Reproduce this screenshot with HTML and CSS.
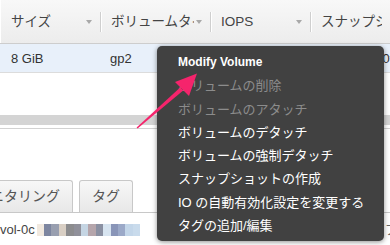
FILE: index.html
```html
<!DOCTYPE html>
<html lang="ja">

<head>
    <meta charset="UTF-8">
    <meta name="viewport" content="width=device-width, initial-scale=1.0">
    <title>EC2 Volumes</title>
    <link rel="stylesheet" href="styles.css">
</head>

<body>
    <div class="page">
        <div class="grid">
            <div class="grid-head">
                <div class="hcell col-size"><span class="htext">サイズ</span><i class="sort"></i></div>
                <div class="hcell col-type"><span class="htext">ボリュームタイプ</span><i class="sort"></i></div>
                <div class="hcell col-iops"><span class="htext">IOPS</span><i class="sort"></i></div>
                <div class="hcell col-snap"><span class="htext">スナップショット</span></div>
            </div>
            <div class="grid-row selected">
                <div class="cell col-size">8 GiB</div>
                <div class="cell col-type">gp2</div>
                <div class="cell col-iops">100 / 3000</div>
                <div class="cell col-snap">snap-0e4a0f8</div>
            </div>
        </div>

        <div class="hscroll">
            <div class="hscroll-bar"></div>
        </div>

        <div class="tabs">
            <div class="tab">モニタリング</div>
            <div class="tab">タグ</div>
        </div>

        <div class="detail">
            <span class="vol-id">vol-0c</span>
            <span class="mosaic">
                <i style="background:#f1e9df"></i><i style="background:#7d86a0"></i><i style="background:#999fb0"></i><i style="background:#d9cfc4"></i><i style="background:#8c8c8e"></i><i style="background:#90909a"></i><i style="background:#c5d5e3"></i><i style="background:#b5a5ab"></i><i style="background:#8a90a2"></i><i style="background:#d7e4f0"></i><i style="background:#8995b8"></i><i style="background:#9ba9c8"></i><i style="background:#c3d6e9"></i><i style="background:#c9dbec"></i>
            </span>
            <span class="detail-label">ブ</span>
        </div>

        <!-- context menu opened on the selected volume -->
        <ul class="context-menu">
            <li class="menu-item strong">Modify Volume</li>
            <li class="menu-item disabled">ボリュームの削除</li>
            <li class="menu-item disabled">ボリュームのアタッチ</li>
            <li class="menu-item">ボリュームのデタッチ</li>
            <li class="menu-item">ボリュームの強制デタッチ</li>
            <li class="menu-item">スナップショットの作成</li>
            <li class="menu-item">IO の自動有効化設定を変更する</li>
            <li class="menu-item">タグの追加/編集</li>
        </ul>

        <svg class="pointer" width="390" height="245" viewBox="0 0 390 245">
            <polygon points="137.6,128.4 136.6,127.4 180.4,87.2 183.2,90.6" fill="#f5246c" />
            <polygon points="197,73.5 175,82 189,96" fill="#f5246c" />
        </svg>
    </div>
</body>

</html>
```

FILE: styles.css
```css
body {
    margin: 0;
    font-family: "Liberation Sans", "Noto Sans CJK JP", sans-serif;
    font-size: 13px;
    color: #333;
    background-color: #fff;
}

.page {
    position: relative;
    width: 390px;
    height: 245px;
    overflow: hidden;
}

/* grid */

.grid-head {
    display: flex;
    align-items: center;
    height: 43px;
    background: linear-gradient(#f8f8f8, #ececec);
    border-bottom: 1px solid #cdcdcd;
    box-shadow: inset 1px 0 #fff;
}

.hcell {
    display: flex;
    flex-shrink: 0;
    align-items: center;
    height: 20px;
    padding-left: 10px;
    padding-right: 8px;
    border-right: 1px solid #cfcfcf;
    box-shadow: 1px 0 #fff;
    color: #444;
    font-size: 13.5px;
    line-height: 20px;
    white-space: nowrap;
}

.htext {
    flex: 1;
    min-width: 0;
    overflow: hidden;
}

.sort {
    width: 0;
    height: 0;
    margin-left: 2px;
    border-left: 3.5px solid transparent;
    border-right: 3.5px solid transparent;
    border-top: 4px solid #a8a8a8;
}

.hcell.col-size {
    width: 81px;
    padding-left: 11px;
}

.hcell.col-type {
    width: 91px;
}

.hcell.col-iops {
    width: 81px;
}

.hcell.col-snap {
    flex: 1;
    flex-shrink: 1;
    min-width: 0;
    border-right: none;
    box-shadow: none;
}

.grid-row {
    display: flex;
    height: 28px;
    border-bottom: 1px solid #dcdcdc;
}

.grid-row.selected {
    background-color: #e8f0fa;
}

.cell {
    flex-shrink: 0;
    box-sizing: border-box;
    padding-left: 10px;
    line-height: 29px;
    white-space: nowrap;
}

.cell.col-size {
    width: 101px;
    padding-left: 11px;
}

.cell.col-type {
    width: 110px;
    padding-left: 9px;
}

.cell.col-iops {
    width: 101px;
}

.cell.col-snap {
    padding-left: 9px;
}

/* horizontal scrollbar under the grid */

.hscroll {
    margin-top: 42px;
    padding-bottom: 3px;
    border-bottom: 1px solid #d2d2d2;
}

.hscroll-bar {
    height: 10px;
    background-color: #d4d4d4;
}

/* detail tabs */

.tabs {
    display: flex;
    align-items: flex-end;
    gap: 6px;
    margin-top: 51px;
    margin-left: -37px;
    border-bottom: 1px solid #c8c8c8;
}

.tab {
    height: 31px;
    padding: 0 12px;
    border: 1px solid #c8c8c8;
    border-bottom: none;
    border-radius: 3px 3px 0 0;
    background: linear-gradient(#f7f7f7, #e8e8e8);
    font-size: 14px;
    line-height: 31px;
    color: #555;
    white-space: nowrap;
}

.detail {
    display: flex;
    align-items: center;
    margin-top: 10px;
    height: 14px;
    line-height: 14px;
    color: #444;
}

.mosaic {
    display: flex;
    margin-left: 2px;
}

.mosaic i {
    display: block;
    width: 7.4px;
    height: 12px;
}

.detail-label {
    margin-left: auto;
    margin-right: -8px;
    color: #666;
}

/* context menu */

.context-menu {
    position: absolute;
    left: 157px;
    top: 46px;
    width: 227px;
    height: 195px;
    box-sizing: border-box;
    margin: 0;
    padding: 5px 0 0 21px;
    list-style: none;
    background-color: #414141;
    border-radius: 5px;
    box-shadow: 0 1px 5px rgba(0, 0, 0, 0.45);
}

.menu-item {
    height: 23.3px;
    line-height: 23.3px;
    color: #fff;
    white-space: nowrap;
}

.menu-item.strong {
    font-size: 12px;
    font-weight: bold;
}

.menu-item.disabled {
    color: #8c8c8c;
}

.pointer {
    position: absolute;
    left: 0;
    top: 0;
    pointer-events: none;
}
```
